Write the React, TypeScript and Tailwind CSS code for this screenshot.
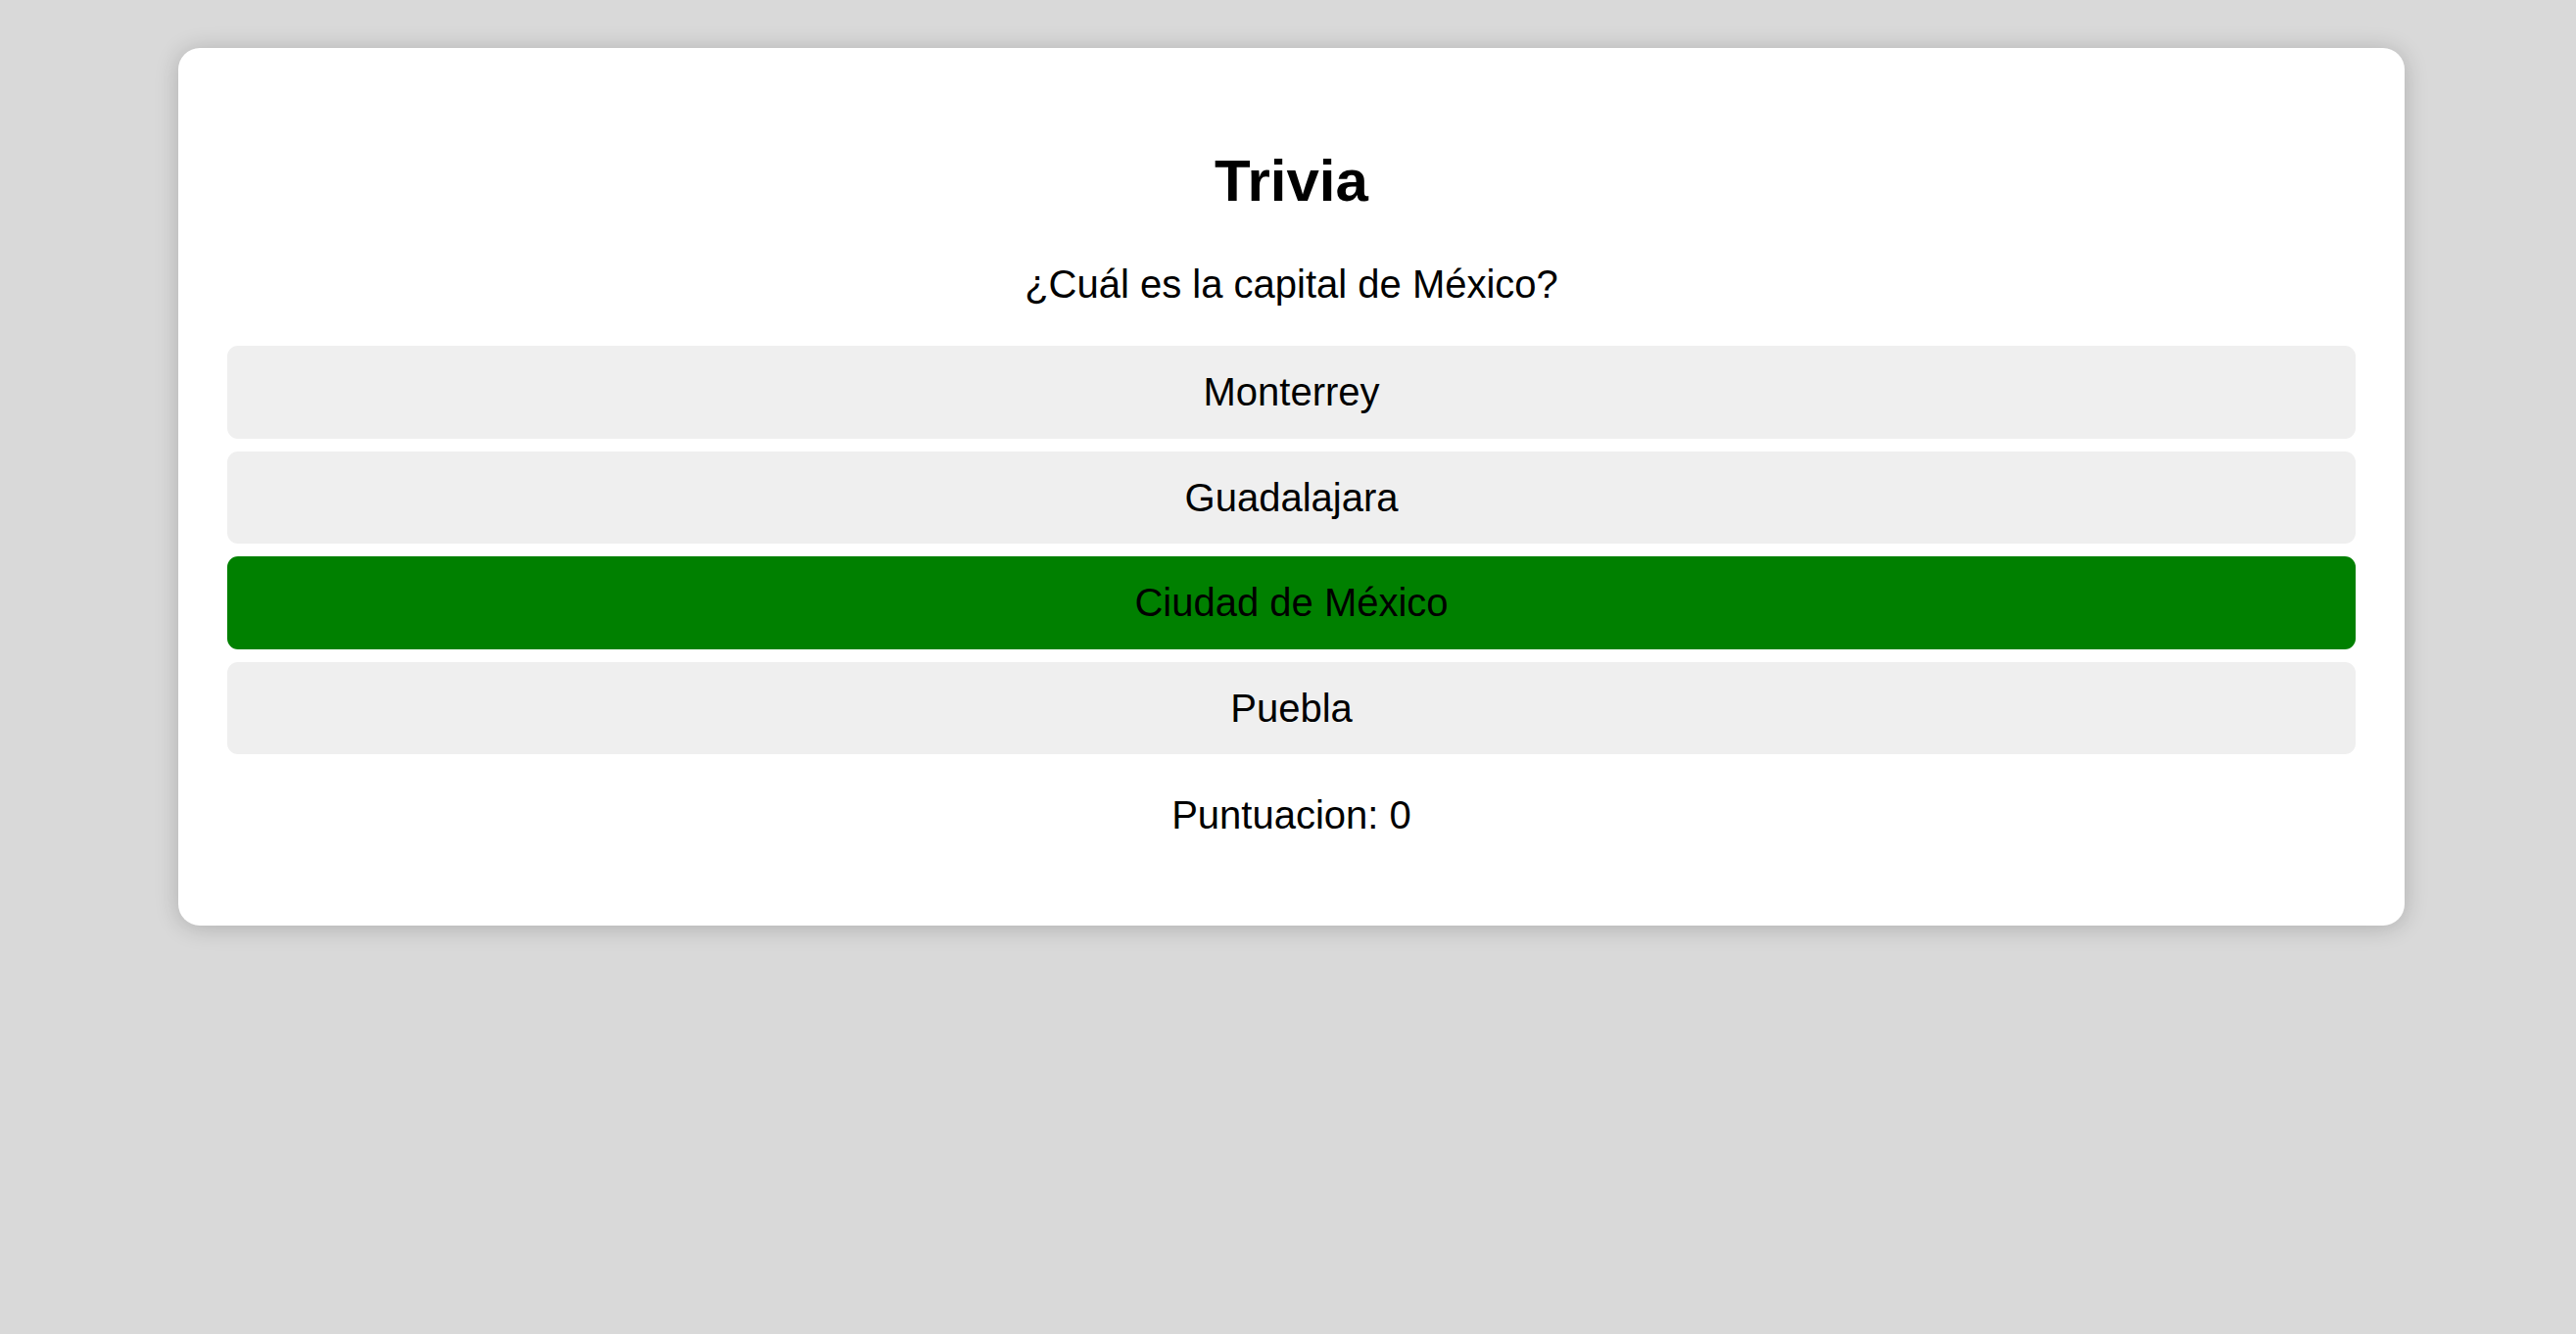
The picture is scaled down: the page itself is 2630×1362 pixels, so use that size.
import { useState } from "react";

const opciones = ["Monterrey", "Guadalajara", "Ciudad de México", "Puebla"];

export default function App() {
  const [elegida] = useState<string>("Ciudad de México");
  const [puntos] = useState<number>(0);

  return (
    <div className="min-h-screen bg-[#d9d9d9] pt-[49px] font-['Liberation_Sans',Arial,sans-serif] text-black">
      <div className="ml-[182px] w-[2273px] rounded-[22px] bg-white px-[50px] pb-[90px] pt-[101px] shadow-[0_2px_24px_rgba(0,0,0,0.2)]">
        {/* Header */}
        <h1 className="text-center text-[60px] font-bold leading-[69px]">Trivia</h1>
        <p className="mt-[48px] text-center text-[40px] leading-[46px]">¿Cuál es la capital de México?</p>

        {/* Opciones */}
        <div className="mt-[40px] flex flex-col gap-[13px]">
          {opciones.map((op) => (
            <button
              key={op}
              className={`h-[94.5px] w-full rounded-[11px] text-center text-[40px] leading-[46px] ${
                op === elegida ? "bg-[#008000]" : "bg-[#efefef]"
              }`}
            >
              {op}
            </button>
          ))}
        </div>

        <p className="mt-[39px] text-center text-[40px] leading-[46px]">Puntuacion: {puntos}</p>
      </div>
    </div>
  );
}
